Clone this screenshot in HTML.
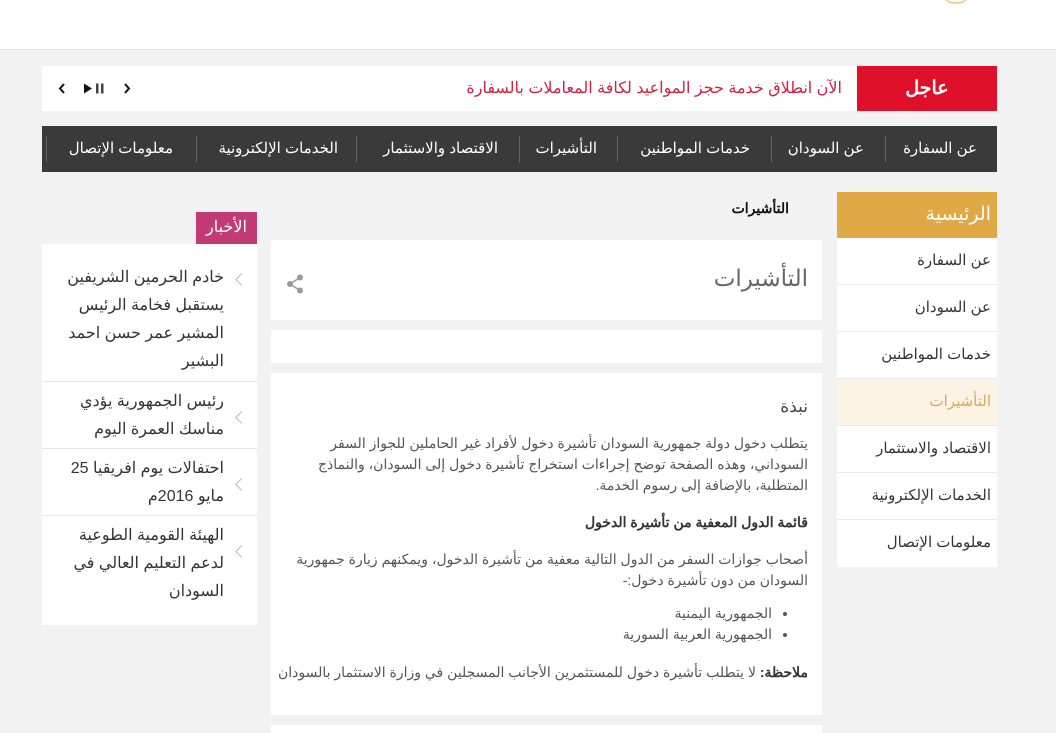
<!DOCTYPE html>
<html lang="ar" dir="rtl"><head><meta charset="utf-8">
<style>
*{margin:0;padding:0;box-sizing:border-box}
body{width:1056px;height:733px;overflow:hidden;background:#f2f2f2;font-family:"Liberation Sans","Noto Sans CJK SC",sans-serif;position:relative;color:#333}
.a{position:absolute}
.hdr{left:0;top:0;width:1056px;height:50px;background:#fff;border-bottom:1px solid #e2e2e2}
.tick{left:42px;top:66px;width:955px;height:45px;background:#fff}
.nav{left:42px;top:126px;width:955px;height:46px;background:#3a3a3a}
.nav span{position:absolute;top:0;height:46px;line-height:46px;color:#fff;font-size:15px;white-space:nowrap}
.sep{position:absolute;top:10px;width:1px;height:26px;background:#666}
.side{left:837px;top:192px;width:160px}
.side div{height:47px;line-height:46px;background:#fff;border-bottom:1px solid #e8e8e8;padding-right:6px;font-size:15px;color:#333}
.card{background:#fff;left:271px;width:551px}
.news{left:42px;top:244px;width:215px;height:381px;background:#fff}
.ni{position:absolute;left:0;width:215px;border-bottom:1px solid #e6e6e6;padding:20px 33px 0 0;font-size:16px;line-height:28px;color:#333;text-align:right}
.ni:before{content:"";position:absolute;right:11px;top:31px;width:8px;height:8px;border-left:1px solid #bbb;border-bottom:1px solid #bbb;transform:rotate(45deg)}
.ct{font-size:14px;color:#555;line-height:21px;text-align:right}
</style></head><body>
<div class="a hdr"></div>
<div class="a" style="left:945px;top:-6px;width:22px;height:10px;border:2px solid #e3b24e;border-radius:50%;opacity:.6"></div>

<div class="a tick">
  <svg class="a" style="left:14px;top:14px;direction:ltr" width="80" height="17" viewBox="0 0 80 17">
    <polyline points="8,4 4,8.5 8,13" fill="none" stroke="#111" stroke-width="2"/>
    <polygon points="28,3.5 36,8.5 28,13.5" fill="#111"/>
    <rect x="40" y="3.5" width="2.5" height="10" fill="#444"/><rect x="45" y="3.5" width="2.5" height="10" fill="#444"/>
    <polyline points="69,4 73,8.5 69,13" fill="none" stroke="#111" stroke-width="2"/>
  </svg>
  <div class="a" style="right:0;top:0;width:140px;height:45px;background:#e0102a;color:#fff;font-weight:bold;font-size:19px;line-height:45px;text-align:center">عاجل</div>
  <div class="a" style="right:155px;top:0;line-height:45px;font-size:16px;color:#d0213c;white-space:nowrap">الآن انطلاق خدمة حجز المواعيد لكافة المعاملات بالسفارة</div>
</div>

<div class="a nav">
  <span style="right:20px">عن السفارة</span><i class="sep" style="left:843px"></i>
  <span style="right:133px">عن السودان</span><i class="sep" style="left:729px"></i>
  <span style="right:247px">خدمات المواطنين</span><i class="sep" style="left:575px"></i>
  <span style="right:400px">التأشيرات</span><i class="sep" style="left:477px"></i>
  <span style="right:499px">الاقتصاد والاستثمار</span><i class="sep" style="left:314px"></i>
  <span style="right:659px">الخدمات الإلكترونية</span><i class="sep" style="left:154px"></i>
  <span style="right:824px">معلومات الإتصال</span><i class="sep" style="left:4px"></i>
</div>

<div class="a side">
  <div style="height:46px;background:#e0a945;color:#fff;font-size:19px;line-height:46px;border:0">الرئيسية</div>
  <div>عن السفارة</div>
  <div>عن السودان</div>
  <div>خدمات المواطنين</div>
  <div style="background:#fcf3e4;color:#d9aa55">التأشيرات</div>
  <div>الاقتصاد والاستثمار</div>
  <div>الخدمات الإلكترونية</div>
  <div style="border:0">معلومات الإتصال</div>
</div>

<div class="a" style="left:700px;top:198px;width:89px;text-align:right;font-size:14px;font-weight:bold;color:#111;line-height:20px">التأشيرات</div>

<div class="a card" style="top:240px;height:80px">
  <div class="a" style="right:14px;top:25px;font-size:23px;color:#666">التأشيرات</div>
  <svg class="a" style="left:15px;top:34px" width="18" height="20" viewBox="0 0 18 20">
    <circle cx="14" cy="3.5" r="3" fill="#999"/><circle cx="4" cy="10" r="3" fill="#999"/><circle cx="14" cy="16.5" r="3" fill="#999"/>
    <path d="M14 3.5 L4 10 L14 16.5" fill="none" stroke="#999" stroke-width="1.6"/>
  </svg>
</div>
<div class="a card" style="top:330px;height:33px"></div>
<div class="a card" style="top:373px;height:342px">
  <div class="a" style="right:14px;top:24px;font-size:17px;color:#444">نبذة</div>
  <div class="a ct" style="right:14px;top:60px;width:525px">يتطلب دخول دولة جمهورية السودان تأشيرة دخول لأفراد غير الحاملين للجواز السفر السوداني، وهذه الصفحة توضح إجراءات استخراج تأشيرة دخول إلى السودان، والنماذج المتطلبة، بالإضافة إلى رسوم الخدمة.</div>
  <div class="a ct" style="right:14px;top:139px;font-weight:bold;color:#333">قائمة الدول المعفية من تأشيرة الدخول</div>
  <div class="a ct" style="right:14px;top:176px;width:525px">أصحاب جوازات السفر من الدول التالية معفية من تأشيرة الدخول، ويمكنهم زيارة جمهورية السودان من دون تأشيرة دخول:-</div>
  <ul class="a ct" style="right:14px;top:230px;padding-right:36px;list-style:disc">
    <li>الجمهورية اليمنية</li><li>الجمهورية العربية السورية</li>
  </ul>
  <div class="a ct" style="right:14px;top:289px;white-space:nowrap"><b style="color:#333">ملاحظة:</b> لا يتطلب تأشيرة دخول للمستثمرين الأجانب المسجلين في وزارة الاستثمار بالسودان</div>
</div>
<div class="a card" style="top:725px;height:8px"></div>

<div class="a" style="left:196px;top:212px;width:61px;height:32px;background:#c23b75;color:#fff;font-size:16px;line-height:32px;text-align:center">الأخبار</div>
<div class="a news">
  <div class="ni" style="top:0;height:138px;padding-top:20px">خادم الحرمين الشريفين يستقبل فخامة الرئيس المشير عمر حسن احمد البشير</div>
  <div class="ni" style="top:138px;height:67px;padding-top:6px">رئيس الجمهورية يؤدي مناسك العمرة اليوم</div>
  <div class="ni" style="top:205px;height:67px;padding-top:6px">احتفالات يوم افريقيا 25 مايو 2016م</div>
  <div class="ni" style="top:272px;height:109px;padding-top:6px;border:0">الهيئة القومية الطوعية لدعم التعليم العالي في السودان</div>
</div>
</body></html>
